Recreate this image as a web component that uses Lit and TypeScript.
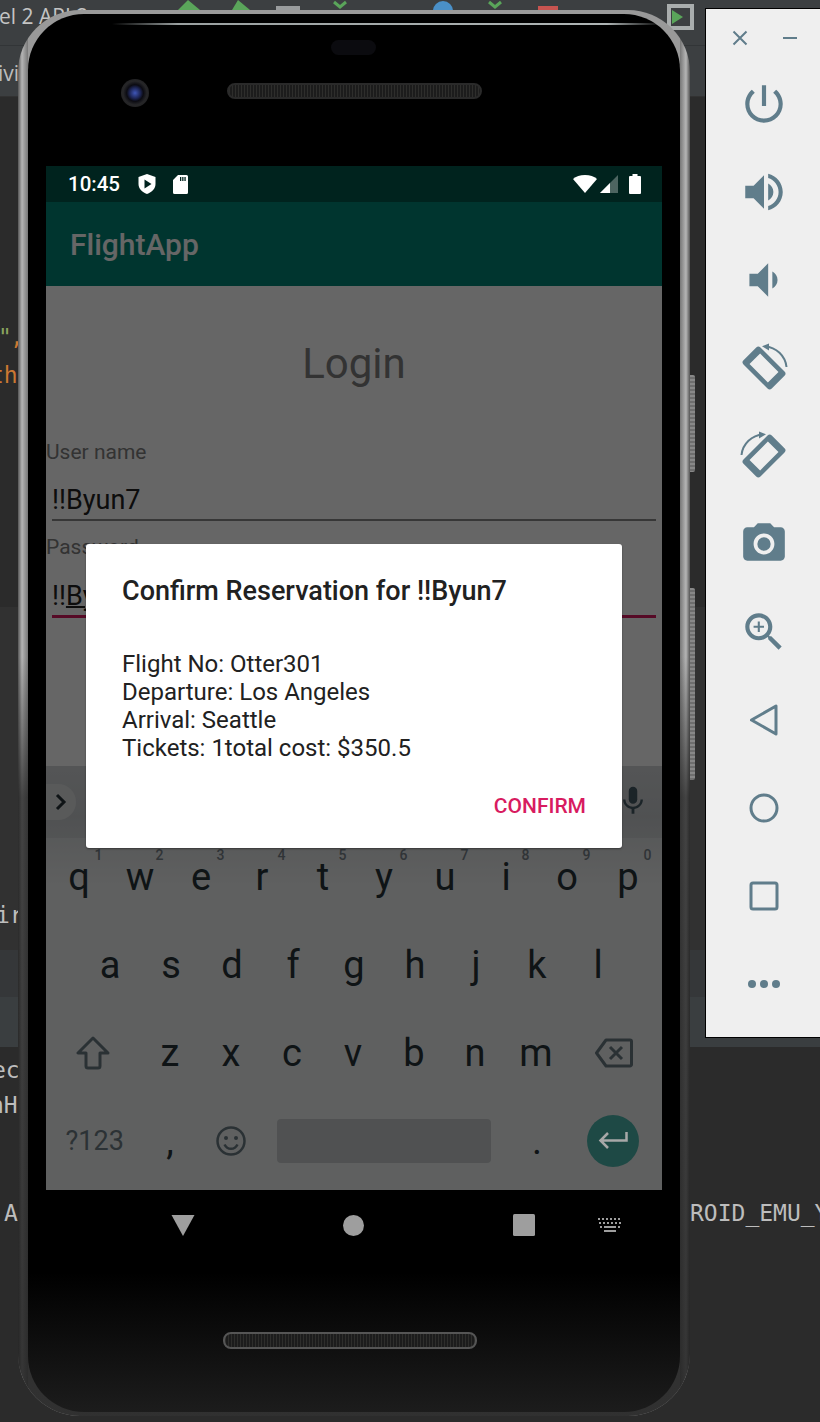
import { LitElement, html, css } from 'lit';
import { customElement } from 'lit/decorators.js';

const ROW1 = ['q', 'w', 'e', 'r', 't', 'y', 'u', 'i', 'o', 'p'];
const HINTS = ['1', '2', '3', '4', '5', '6', '7', '8', '9', '0'];
const ROW2 = ['a', 's', 'd', 'f', 'g', 'h', 'j', 'k', 'l'];
const ROW3 = ['z', 'x', 'c', 'v', 'b', 'n', 'm'];

// little bits of the IDE that stick out behind the emulator
const IDE_TEXT = [
  { t: 'el 2 API 2', x: -1, y: 2, c: '#c4c4c4', sans: true },
  { t: 'ivi', x: -2, y: 59, c: '#bdbdbd', sans: true },
  { t: '"', x: -2, y: 323, c: '#8aa35f', sans: false },
  { t: ',', x: 10, y: 323, c: '#cc7832', sans: false },
  { t: 'th', x: -10, y: 361, c: '#cc7832', sans: false },
  { t: 'ir', x: -4, y: 901, c: '#bdbdbd', sans: false },
  { t: 'ec', x: -8, y: 1056, c: '#bdbdbd', sans: false },
  { t: 'nH', x: -10, y: 1091, c: '#bdbdbd', sans: false },
  { t: 'A', x: 4, y: 1199, c: '#bdbdbd', sans: false },
  { t: 'ROID_EMU_Y', x: 690, y: 1199, c: '#bdbdbd', sans: false },
];

const rotateIcon = html`
  <svg class="rail-icon" viewBox="0 0 50 50">
    <path
      transform="rotate(-45 25 25)"
      fill-rule="evenodd"
      d="M16 5h18a3 3 0 0 1 3 3v34a3 3 0 0 1-3 3H16a3 3 0 0 1-3-3V8a3 3 0 0 1 3-3zM17.500 12v26h15V12z"
    />
    <path d="M26 3.500A23 23 0 0 1 47.500 24" fill="none" stroke="#607d8b" stroke-width="2" />
    <path d="M23 3.200L30 .5v7z" />
  </svg>
`;

@customElement('app-root')
class AppRoot extends LitElement {
  static styles = css`
    :host {
      display: block;
      position: relative;
      width: 820px;
      height: 1422px;
      overflow: hidden;
      background: #2b2b2b;
      font-family: Roboto, sans-serif;
    }

    /* IDE behind the emulator */
    .ide-top {
      height: 97px;
      background: #3c3f41;
      border-bottom: 1px solid #323232;
      box-sizing: border-box;
      background-image: linear-gradient(#323537, #323537);
      background-size: 100% 1px;
      background-position: 0 45px;
      background-repeat: no-repeat;
    }
    .ide-band-a {
      margin-top: 510px;
      height: 343px;
      background: #313131;
    }
    .ide-band-b {
      height: 47px;
      background: #353739;
    }
    .ide-band-d {
      height: 50px;
      background: #3a3e40;
    }
    .ide-text {
      position: absolute;
      font-family: 'DejaVu Sans Mono', monospace;
      font-size: 23px;
      line-height: 28px;
      white-space: pre;
    }
    .ide-text.sans {
      font-family: 'Open Sans', sans-serif;
      font-size: 21px;
    }
    .tool {
      position: absolute;
      top: 0;
      height: 10px;
    }
    .run-box {
      position: absolute;
      left: 667px;
      top: 4px;
      width: 18px;
      height: 18px;
      border: 4px solid #a9adad;
      background: #3c3f41;
      display: flex;
      align-items: center;
      padding-left: 1px;
    }

    /* phone */
    .phone {
      position: absolute;
      left: 18px;
      top: 10px;
      width: 672px;
      height: 1406px;
      box-sizing: border-box;
      padding: 4px 10px;
      border-radius: 62px;
      background: linear-gradient(90deg, #555 0, #b5b5b5 40%, #777 100%) 0 0 / 10px 100% no-repeat,
        linear-gradient(270deg, #555 0, #b5b5b5 40%, #777 100%) 100% 0 / 10px 100% no-repeat,
        #999;
    }
    .phone-shade {
      position: absolute;
      inset: 0;
      border-radius: 62px;
      background: linear-gradient(180deg, transparent 0, transparent 46%, rgba(30, 30, 30, 0.75) 56%, rgba(30, 30, 30, 0.85) 100%);
    }
    .body {
      position: relative;
      height: 100%;
      box-sizing: border-box;
      padding: 0 18px;
      border-radius: 56px;
      background: linear-gradient(180deg, #000 0, #000 90%, #1c1c1c 100%);
      display: flex;
      flex-direction: column;
    }
    .bezel {
      position: relative;
      height: 152px;
      flex: none;
    }
    .top-glint {
      position: absolute;
      left: 66px;
      right: 0;
      top: 9px;
      height: 2px;
      background: linear-gradient(90deg, transparent, #9aa0a0 12%, #aeb4b4 90%, transparent);
    }
    .sensor {
      position: absolute;
      left: 285px;
      top: 26px;
      width: 45px;
      height: 15px;
      border-radius: 8px;
      background: #0b0b0f;
    }
    .camera {
      position: absolute;
      left: 75px;
      top: 65px;
      width: 28px;
      height: 28px;
      border-radius: 50%;
      background: radial-gradient(circle at 50% 50%, #3f56b8 0, #1c2452 28%, #0b0b12 42%, #262628 60%, #1b1b1b 100%);
    }
    .speaker {
      position: absolute;
      height: 16px;
      border-radius: 8px;
      box-sizing: border-box;
      border: 2px solid #2a2a2a;
      background: repeating-linear-gradient(90deg, #2e2e2c 0 1px, #1c1c1c 1px 3px);
    }
    .speaker.up {
      left: 181px;
      top: 69px;
      width: 255px;
    }
    .speaker.down {
      left: 195px;
      top: 1318px;
      width: 254px;
      height: 17px;
      border-color: #555;
    }
    .side-key {
      position: absolute;
      left: 672px;
      width: 5px;
      background: repeating-linear-gradient(180deg, #888 0 2px, #6e6e6e 2px 4px);
      border-radius: 0 2px 2px 0;
    }
    .side-key.power {
      top: 365px;
      height: 97px;
    }
    .side-key.volume {
      top: 578px;
      height: 192px;
    }

    /* screen */
    .screen {
      flex: none;
      width: 616px;
    }
    .status {
      height: 36px;
      background: #00231e;
      display: flex;
      align-items: center;
      padding-left: 22px;
      color: #fff;
      font-size: 20.5px;
      font-weight: 500;
    }
    .status-left {
      display: flex;
      align-items: center;
    }
    .status-right {
      margin-left: auto;
      margin-right: 21px;
      display: flex;
      align-items: center;
      gap: 3px;
    }
    .status svg {
      display: block;
      fill: #fff;
    }
    .app {
      position: relative;
      height: 988px;
      overflow: hidden;
    }
    .scrim {
      position: absolute;
      inset: 0;
      z-index: 1;
      background: rgba(0, 0, 0, 0.6);
    }
    .appbar {
      height: 84px;
      box-sizing: border-box;
      padding-left: 24px;
      background: #008577;
      color: #fff;
      display: flex;
      align-items: center;
      font-size: 30px;
      font-weight: 500;
    }
    .content {
      height: 480px;
      background: #fff;
      box-sizing: border-box;
      padding-top: 53px;
    }
    .title {
      text-align: center;
      font-size: 42px;
      line-height: 50px;
      color: #808080;
    }
    .label {
      font-size: 21px;
      line-height: 28px;
      color: #808080;
    }
    .label.first {
      margin-top: 49px;
    }
    .label.second {
      margin-top: 12px;
    }
    .input {
      margin: 16px 6px 0;
      font-size: 27px;
      line-height: 37px;
      color: #212121;
      border-bottom: 2px solid #8a8a8a;
    }
    .input.focus {
      margin-top: 17px;
      border-bottom: 3px solid #d81b60;
    }
    .input u {
      text-decoration-thickness: 2px;
    }

    /* keyboard */
    .keyboard {
      height: 424px;
      background: #eef0f0;
      color: #263238;
    }
    .strip {
      height: 72px;
      position: relative;
      background: linear-gradient(180deg, #d2d5d7, #c8cbce 70%, #cfd2d4);
      display: flex;
      align-items: center;
    }
    .chevron {
      width: 30px;
      height: 36px;
      border-radius: 0 18px 18px 0;
      background: #dfe1e2;
      display: flex;
      align-items: center;
      padding-left: 9px;
      box-sizing: border-box;
    }
    .mic {
      margin-left: auto;
      margin-right: 12px;
      margin-bottom: 2px;
      display: block;
      fill: #455a64;
    }
    .row {
      height: 88px;
      display: flex;
      box-sizing: border-box;
    }
    .row.one {
      padding-left: 2.5px;
      background: linear-gradient(180deg, #dcdfe0, #eef0f0 55%);
    }
    .row.two {
      padding-left: 33.5px;
    }
    .key {
      position: relative;
      width: 61px;
      flex: none;
      display: flex;
      align-items: center;
      justify-content: center;
      font-size: 38px;
      line-height: 88px;
      padding-bottom: 11px;
      box-sizing: border-box;
    }
    .hint {
      position: absolute;
      right: 7px;
      top: 8px;
      font-size: 14px;
      font-weight: 500;
      line-height: 18px;
      color: #78828a;
    }
    .key.side {
      width: 93.5px;
    }
    .key.wide {
      width: 95px;
    }
    .key.space {
      width: 245px;
    }
    .key.symbols {
      font-size: 27px;
      color: #6f7e86;
      padding-left: 4px;
    }
    .key svg {
      display: block;
    }
    .space-bar {
      width: 214px;
      height: 44px;
      border-radius: 4px;
      background: #c8cbcd;
    }
    .enter {
      width: 52px;
      height: 52px;
      margin-right: 4px;
      border-radius: 50%;
      background: #4db6ac;
      display: flex;
      align-items: center;
      justify-content: center;
    }
    .enter svg {
      position: relative;
      z-index: 2;
    }

    /* dialog */
    .dialog {
      position: absolute;
      z-index: 2;
      left: 40px;
      top: 342px;
      width: 536px;
      height: 304px;
      box-sizing: border-box;
      padding: 31px 36px 0;
      background: #fff;
      border-radius: 3px;
      box-shadow: 0 1px 2px rgba(0, 0, 0, 0.4);
      display: flex;
      flex-direction: column;
    }
    .dialog-title {
      font-size: 27px;
      line-height: 32px;
      font-weight: 500;
      color: #212121;
    }
    .dialog-body {
      margin-top: 43px;
      font-size: 24px;
      line-height: 28px;
      color: #212121;
    }
    .dialog-action {
      margin-top: 30px;
      text-align: right;
      font-size: 21px;
      line-height: 28px;
      font-weight: 500;
      color: #d81b60;
    }

    /* nav bar */
    .nav {
      height: 72px;
      display: flex;
      align-items: center;
      padding-left: 125px;
      padding-bottom: 2px;
      box-sizing: border-box;
    }
    .nav svg {
      display: block;
      fill: #9e9e9e;
    }
    .nav .home {
      margin-left: 148px;
    }
    .nav .recent {
      margin-left: 149px;
    }
    .nav .ime {
      margin-left: 63px;
    }

    /* emulator tool rail */
    .rail {
      position: absolute;
      left: 705px;
      top: 8px;
      width: 116px;
      height: 1030px;
      box-sizing: border-box;
      background: #efefef;
      border: 1px solid #000;
      fill: #607d8b;
      color: #607d8b;
    }
    .rail-head {
      height: 51px;
      display: flex;
      align-items: flex-start;
      padding: 21px 0 0 26px;
      box-sizing: border-box;
      gap: 35px;
    }
    .rail-head svg {
      display: block;
    }
    .rail-slot {
      height: 88px;
      width: 116px;
      display: flex;
      align-items: center;
      justify-content: center;
    }
    .rail-icon {
      display: block;
      width: 50px;
      height: 50px;
    }
  `;

  render() {
    return html`
      <div class="ide-top"></div>
      <div class="ide-band-a"></div>
      <div class="ide-band-b"></div>
      <div class="ide-band-d"></div>
      ${IDE_TEXT.map(
        (b) => html`<div
          class="ide-text ${b.sans ? 'sans' : ''}"
          style="left:${b.x}px;top:${b.y}px;color:${b.c}"
        >${b.t}</div>`
      )}
      ${this.renderToolbarScraps()}
      <div class="phone">
        <div class="phone-shade"></div>
        <div class="side-key power"></div>
        <div class="side-key volume"></div>
        <div class="body">
          <div class="bezel">
            <div class="top-glint"></div>
            <div class="sensor"></div>
            <div class="camera"></div>
            <div class="speaker up"></div>
          </div>
          <div class="screen">
            ${this.renderStatus()}
            <div class="app">
              <div class="appbar">FlightApp</div>
              <div class="content">
                <div class="title">Login</div>
                <div class="label first">User name</div>
                <div class="input">!!Byun7</div>
                <div class="label second">Password</div>
                <div class="input focus">!!<u>Byun7</u></div>
              </div>
              ${this.renderKeyboard()}
              <div class="scrim"></div>
              <div class="dialog">
                <div class="dialog-title">Confirm Reservation for !!Byun7</div>
                <div class="dialog-body">
                  Flight No: Otter301<br />
                  Departure: Los Angeles<br />
                  Arrival: Seattle<br />
                  Tickets: 1total cost: $350.5
                </div>
                <div class="dialog-action">CONFIRM</div>
              </div>
            </div>
            ${this.renderNav()}
          </div>
          <div class="speaker down"></div>
        </div>
      </div>
      ${this.renderRail()}
    `;
  }

  renderToolbarScraps() {
    return html`
      <svg class="tool" style="left:178px;width:24px" viewBox="0 0 24 10"><path d="M10 0l12 10H0z" fill="#5aa55a" /></svg>
      <svg class="tool" style="left:228px;width:24px" viewBox="0 0 24 10"><path d="M10 0l12 10H4z" fill="#5aa55a" /></svg>
      <svg class="tool" style="left:276px;width:24px" viewBox="0 0 24 10"><rect y="6" width="24" height="4" fill="#9a9d9e" /></svg>
      <svg class="tool" style="left:333px;width:14px" viewBox="0 0 14 10"><path d="M1 2l6 5 6-5" fill="none" stroke="#5aa55a" stroke-width="3" /></svg>
      <svg class="tool" style="left:432px;width:22px" viewBox="0 0 22 10"><circle cx="11" cy="11" r="10" fill="#4a90c8" /></svg>
      <svg class="tool" style="left:488px;width:14px" viewBox="0 0 14 10"><path d="M1 2l6 5 6-5" fill="none" stroke="#5aa55a" stroke-width="3" /></svg>
      <svg class="tool" style="left:538px;width:20px" viewBox="0 0 20 10"><rect y="6" width="20" height="4" fill="#c75450" /></svg>
      <div class="run-box">
        <svg width="11" height="14" viewBox="0 0 11 14"><path d="M0 0l11 7-11 7z" fill="#5aa55a" /></svg>
      </div>
    `;
  }

  renderStatus() {
    return html`
      <div class="status">
        <div class="status-left">
          <span>10:45</span>
          <svg style="margin-left:18px" width="18" height="20" viewBox="0 0 18 20">
            <path
              fill-rule="evenodd"
              d="M9 0l8.500 3v7c0 4.500-3.500 8.300-8.500 10C4 18.300.5 14.500.5 10V3zM6.500 5.500v9L13.500 10z"
            />
          </svg>
          <svg style="margin-left:17px" width="15" height="19" viewBox="0 0 15 19">
            <path
              fill-rule="evenodd"
              d="M5 0h8.500A1.500 1.500 0 0 1 15 1.500v16a1.500 1.500 0 0 1-1.500 1.500h-12A1.500 1.500 0 0 1 0 17.500V5zM7 2v4h1.300V2zm2.200 0v4h1.300V2zm2.200 0v4h1.300V2z"
            />
          </svg>
        </div>
        <div class="status-right">
          <svg width="24" height="18" viewBox="0 0 24 18"><path d="M12 18L0 4C3 1.500 7 0 12 0s9 1.500 12 4z" /></svg>
          <svg width="18" height="18" viewBox="0 0 18 18">
            <path d="M18 0v18H0z" fill-opacity="0.3" />
            <path d="M10 8v10H0z" />
          </svg>
          <svg style="margin-left:8px" width="12" height="20" viewBox="0 0 12 20">
            <path d="M3.500 0h5v2H11a1 1 0 0 1 1 1v16a1 1 0 0 1-1 1H1a1 1 0 0 1-1-1V3a1 1 0 0 1 1-1h2.500z" />
          </svg>
        </div>
      </div>
    `;
  }

  renderKeyboard() {
    return html`
      <div class="keyboard">
        <div class="strip">
          <div class="chevron">
            <svg width="12" height="18" viewBox="0 0 12 18">
              <path d="M2 2l7 7-7 7" fill="none" stroke="#263238" stroke-width="3" />
            </svg>
          </div>
          <svg class="mic" width="34" height="34" viewBox="0 0 24 24">
            <path d="M12 14c1.660 0 3-1.340 3-3V5c0-1.660-1.340-3-3-3S9 3.340 9 5v6c0 1.660 1.340 3 3 3z" />
            <path d="M17.300 11c0 3-2.540 5.100-5.300 5.100S6.700 14 6.700 11H5c0 3.410 2.720 6.230 6 6.720V21h2v-3.280c3.280-.48 6-3.300 6-6.720h-1.700z" />
          </svg>
        </div>
        <div class="row one">
          ${ROW1.map((k, i) => html`<div class="key"><span class="hint">${HINTS[i]}</span>${k}</div>`)}
        </div>
        <div class="row two">${ROW2.map((k) => html`<div class="key">${k}</div>`)}</div>
        <div class="row">
          <div class="key side">
            <svg width="34" height="34" viewBox="0 0 34 34">
              <path d="M17 2L2 17h8v13a2 2 0 0 0 2 2h10a2 2 0 0 0 2-2V17h8z" fill="none" stroke="#6a7a83" stroke-width="3" stroke-linejoin="round" />
            </svg>
          </div>
          ${ROW3.map((k) => html`<div class="key">${k}</div>`)}
          <div class="key wide">
            <svg width="38" height="30" viewBox="0 0 38 30">
              <path d="M11 2h24a1.500 1.500 0 0 1 1.500 1.500v23A1.500 1.500 0 0 1 35 28H11L1.500 15z" fill="none" stroke="#6a7a83" stroke-width="3" stroke-linejoin="round" />
              <path d="M15 9l12 12M27 9L15 21" stroke="#6a7a83" stroke-width="3" />
            </svg>
          </div>
        </div>
        <div class="row">
          <div class="key side symbols">?123</div>
          <div class="key">,</div>
          <div class="key">
            <svg width="30" height="30" viewBox="0 0 30 30">
              <circle cx="15" cy="15" r="13.500" fill="none" stroke="#6a7a83" stroke-width="2.500" />
              <circle cx="10" cy="12" r="2" fill="#6a7a83" />
              <circle cx="20" cy="12" r="2" fill="#6a7a83" />
              <path d="M8.500 18.500c1.500 3 3.800 4.300 6.500 4.300s5-1.300 6.500-4.300" fill="none" stroke="#6a7a83" stroke-width="2.500" />
            </svg>
          </div>
          <div class="key space"><div class="space-bar"></div></div>
          <div class="key">.</div>
          <div class="key wide">
            <div class="enter">
              <svg width="30" height="20" viewBox="0 0 30 20">
                <path d="M28.500 1v8.500H3M10 2L2.500 9.500 10 17" fill="none" stroke="#a8a8a8" stroke-width="2.500" />
              </svg>
            </div>
          </div>
        </div>
      </div>
    `;
  }

  renderNav() {
    return html`
      <div class="nav">
        <svg width="24" height="21" viewBox="0 0 24 21"><path d="M.5 0h23L12 21z" /></svg>
        <svg class="home" width="21" height="21" viewBox="0 0 21 21"><circle cx="10.500" cy="10.500" r="10.500" /></svg>
        <svg class="recent" width="22" height="22" viewBox="0 0 22 22"><rect width="22" height="22" rx="1.500" /></svg>
        <svg class="ime" width="24" height="14" viewBox="0 0 24 14">
          <path d="M0 0h2v2H0zm4 0h2v2H4zm4 0h2v2H8zm4 0h2v2h-2zm4 0h2v2h-2zm4 0h2v2h-2zM1 4h2v2H1zm4 0h2v2H5zm4 0h2v2H9zm4 0h2v2h-2zm4 0h2v2h-2zm4 0h2v2h-2zM2 8h2v2H2zm4 0h12v2H6zm14 0h2v2h-2zM6 12h12v2H6z" />
        </svg>
      </div>
    `;
  }

  renderRail() {
    return html`
      <div class="rail">
        <div class="rail-head">
          <svg width="16" height="16" viewBox="0 0 16 16">
            <path d="M1.500 1.500l13 13M14.500 1.500l-13 13" stroke="#607d8b" stroke-width="2" fill="none" />
          </svg>
          <svg style="margin-top:7px" width="14" height="2" viewBox="0 0 14 2"><rect width="14" height="2" /></svg>
        </div>
        <div class="rail-slot">
          <svg class="rail-icon" viewBox="0 0 24 24">
            <path d="M13 3h-2v10h2V3zm4.830 2.170l-1.420 1.420C17.990 7.860 19 9.810 19 12c0 3.870-3.130 7-7 7s-7-3.130-7-7c0-2.190 1.010-4.140 2.580-5.420L6.170 5.170C4.230 6.820 3 9.260 3 12c0 4.970 4.030 9 9 9s9-4.030 9-9c0-2.740-1.230-5.180-3.170-6.830z" />
          </svg>
        </div>
        <div class="rail-slot">
          <svg class="rail-icon" viewBox="0 0 24 24">
            <path d="M3 9v6h4l5 5V4L7 9H3zm13.500 3c0-1.770-1.020-3.290-2.500-4.030v8.050c1.480-.73 2.500-2.250 2.500-4.020zM14 3.230v2.060c2.890.86 5 3.540 5 6.710s-2.110 5.850-5 6.710v2.060c4.010-.91 7-4.490 7-8.770s-2.990-7.860-7-8.770z" />
          </svg>
        </div>
        <div class="rail-slot">
          <svg class="rail-icon" viewBox="0 0 24 24">
            <path d="M18.500 12c0-1.770-1.020-3.290-2.500-4.030v8.050c1.480-.73 2.500-2.250 2.500-4.020zM5 9v6h4l5 5V4L9 9H5z" />
          </svg>
        </div>
        <div class="rail-slot">${rotateIcon}</div>
        <div class="rail-slot" style="transform:scaleX(-1)">${rotateIcon}</div>
        <div class="rail-slot">
          <svg class="rail-icon" viewBox="0 0 24 24">
            <path d="M12 15.200a3.200 3.200 0 1 0 0-6.400 3.200 3.200 0 0 0 0 6.400z" />
            <path d="M9 2L7.170 4H4c-1.100 0-2 .9-2 2v12c0 1.100.9 2 2 2h16c1.100 0 2-.9 2-2V6c0-1.100-.9-2-2-2h-3.170L15 2H9zm3 15c-2.760 0-5-2.240-5-5s2.240-5 5-5 5 2.240 5 5-2.240 5-5 5z" />
          </svg>
        </div>
        <div class="rail-slot">
          <svg class="rail-icon" viewBox="0 0 24 24">
            <path d="M15.500 14h-.79l-.28-.27C15.410 12.590 16 11.110 16 9.500 16 5.910 13.090 3 9.500 3S3 5.910 3 9.500 5.910 16 9.500 16c1.610 0 3.090-.59 4.230-1.570l.27.28v.79l5 4.990L20.490 19l-4.990-5zm-6 0C7.010 14 5 11.990 5 9.500S7.010 5 9.500 5 14 7.010 14 9.500 11.990 14 9.500 14z" />
            <path d="M12 10h-2v2H9v-2H7V9h2V7h1v2h2v1z" />
          </svg>
        </div>
        <div class="rail-slot">
          <svg class="rail-icon" viewBox="0 0 50 50">
            <path d="M12.500 25L37 11v28z" fill="none" stroke="#607d8b" stroke-width="3" stroke-linejoin="round" />
          </svg>
        </div>
        <div class="rail-slot">
          <svg class="rail-icon" viewBox="0 0 50 50">
            <circle cx="25" cy="25" r="13" fill="none" stroke="#607d8b" stroke-width="3" />
          </svg>
        </div>
        <div class="rail-slot">
          <svg class="rail-icon" viewBox="0 0 50 50">
            <rect x="12" y="12" width="26" height="26" rx="2" fill="none" stroke="#607d8b" stroke-width="3" />
          </svg>
        </div>
        <div class="rail-slot">
          <svg class="rail-icon" viewBox="0 0 50 50">
            <circle cx="13" cy="25" r="4" />
            <circle cx="25" cy="25" r="4" />
            <circle cx="37" cy="25" r="4" />
          </svg>
        </div>
      </div>
    `;
  }
}
